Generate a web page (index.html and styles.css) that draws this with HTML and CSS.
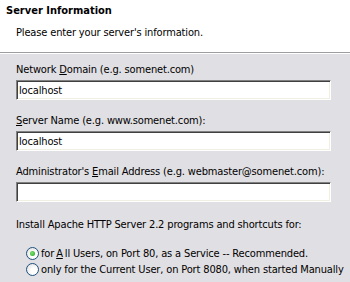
FILE: index.html
```html
<!DOCTYPE html>
<html lang="en">
<head>
  <meta charset="UTF-8" />
  <title>Server Information</title>
  <link rel="stylesheet" href="styles.css">
</head>
<body>
  <div class="header">
    <h1>Server Information</h1>
    <p>Please enter your server's information.</p>
  </div>

  <div class="content">
    <label>Network <u>D</u>omain (e.g. somenet.com)</label>
    <input type="text" value="localhost" />

    <label><u>S</u>erver Name (e.g. www.somenet.com):</label>
    <input type="text" value="localhost" />

    <label>Administrator's <u>E</u>mail Address (e.g. webmaster@somenet.com):</label>
    <input type="text" value="" />

    <p class="install">Install Apache HTTP Server 2.2 programs and shortcuts for:</p>

    <div class="option">
      <span class="radio checked"></span>
      for <u>A</u>ll Users, on Port 80, as a Service -- Recommended.
    </div>
    <div class="option">
      <span class="radio"></span>
      only for the Current User, on Port 8080, when started Manually
    </div>
  </div>
</body>
</html>
```

FILE: styles.css
```css
body {
  margin: 0;
  background-color: #e0dfe3;
  font-family: "DejaVu Sans Condensed", "DejaVu Sans", sans-serif;
  font-size: 11px;
  letter-spacing: -0.15px;
  color: #000;
  overflow: hidden;
}
.header {
  background-color: #fff;
  height: 52px;
  border-bottom: 1px solid #9d9da1;
  box-shadow: 0 1px 0 #fff;
}
.header h1 {
  margin: 0;
  padding: 4px 0 0 6px;
  font-size: 11px;
  font-weight: bold;
  line-height: 13px;
  letter-spacing: 0;
}
.header p {
  margin: 0;
  padding: 9px 0 0 16px;
  line-height: 13px;
}
.content {
  padding: 10px 0 0 16px;
}
label {
  display: block;
  line-height: 13px;
  height: 13px;
}
input {
  display: block;
  box-sizing: border-box;
  width: 315px;
  height: 20px;
  margin: 4px 0 14px;
  padding: 1px 2px;
  font-family: inherit;
  font-size: 11px;
  letter-spacing: -0.15px;
  border: 1px solid;
  border-color: #808080 #fff #fff #808080;
  box-shadow: inset 1px 1px #404040, inset -1px -1px #f1efe2;
  background: #fff;
  outline: none;
}
.install {
  margin: 16px 0 0;
  line-height: 13px;
}
.option {
  display: flex;
  align-items: center;
  gap: 2px;
  margin-left: 10px;
  height: 16px;
  line-height: 13px;
  white-space: nowrap;
}
.install + .option {
  margin-top: 14px;
}
.radio {
  display: inline-block;
  box-sizing: border-box;
  width: 13px;
  height: 13px;
  border-radius: 50%;
  border: 1px solid #1c5180;
  background: radial-gradient(circle at 65% 65%, #fff 30%, #dcdad5 100%);
  position: relative;
}
.radio.checked::after {
  content: "";
  position: absolute;
  left: 3px;
  top: 3px;
  width: 5px;
  height: 5px;
  border-radius: 50%;
  background: radial-gradient(circle at 40% 40%, #7be36c, #21a121);
}
```
